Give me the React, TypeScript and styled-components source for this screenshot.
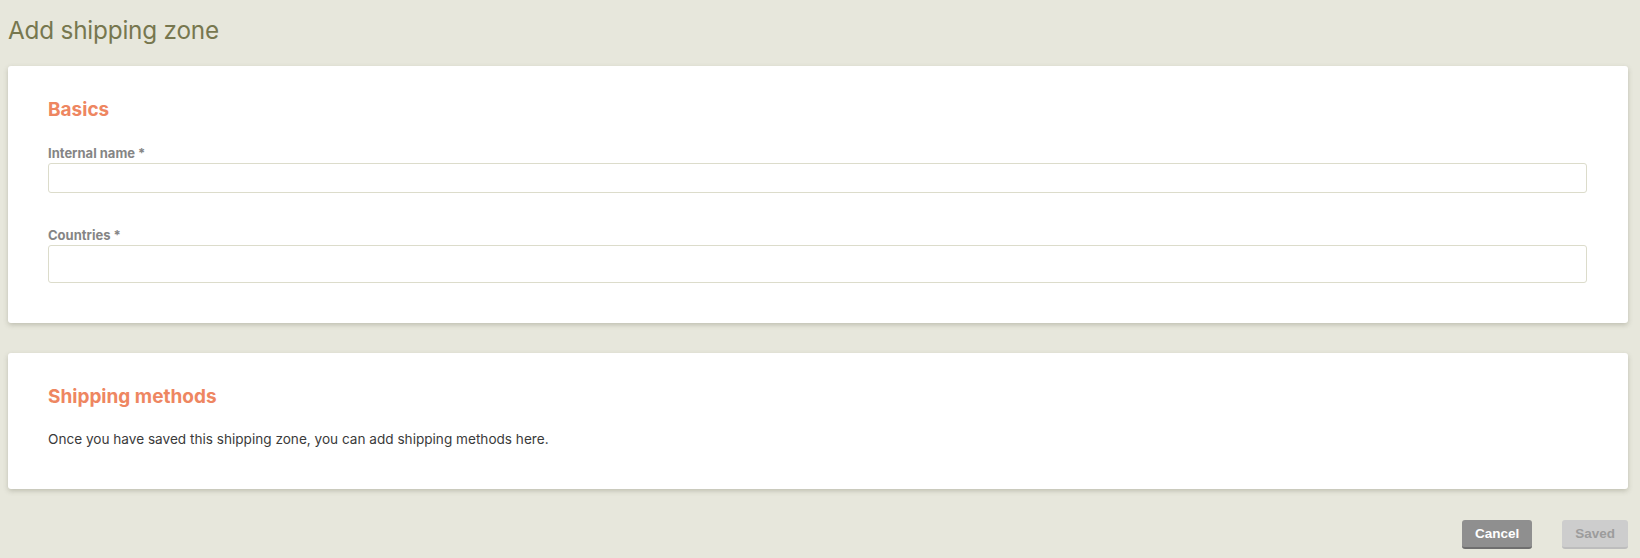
import React from 'react';
import styled, { createGlobalStyle } from 'styled-components';

const colors = {
  page: '#e7e7dc',
  title: '#77774f',
  accent: '#ee8661',
  label: '#858585',
  border: '#dcdccb',
  text: '#3a3a3a',
};

const GlobalStyle = createGlobalStyle`
  html, body {
    margin: 0;
    padding: 0;
    background: ${colors.page};
    font-family: Inter, "Noto Sans", sans-serif;
  }
`;

const Page = styled.div`
  min-height: 558px;
  box-sizing: border-box;
  padding: 14px 12px 0 8px;
  display: flex;
  flex-direction: column;
`;

const PageTitle = styled.h1`
  margin: 0 0 20px;
  font-size: 24.3px;
  line-height: 32px;
  font-weight: 400;
  color: ${colors.title};
  letter-spacing: -0.2px;
`;

const Card = styled.section`
  background: #fff;
  border-radius: 3px;
  box-shadow: 0 2px 5px rgba(90, 90, 70, 0.28);
  padding: 32px 41px 40px 40px;
  margin-bottom: 30px;
`;

const CardHeading = styled.h2`
  margin: 0;
  font-size: 19px;
  line-height: 24px;
  font-weight: 700;
  color: ${colors.accent};
`;

const Field = styled.div<{ $first?: boolean }>`
  display: flex;
  flex-direction: column;
  margin-top: ${p => (p.$first ? '23px' : '34px')};
`;

const Label = styled.label`
  font-size: 13px;
  line-height: 16px;
  font-weight: 700;
  color: ${colors.label};
  margin-bottom: 2px;
`;

const Input = styled.input<{ $tall?: boolean }>`
  box-sizing: border-box;
  height: ${p => (p.$tall ? '38px' : '30px')};
  width: 100%;
  border: 1px solid ${colors.border};
  border-radius: 3px;
  background: #fff;
  font: inherit;
  font-size: 13px;
  padding: 0 8px;
  outline: none;
`;

const Note = styled.p`
  margin: 20px 0 0;
  font-size: 13.6px;
  line-height: 20px;
  color: ${colors.text};
`;

const Actions = styled.div`
  display: flex;
  justify-content: flex-end;
  gap: 30px;
  margin-top: 1px;
`;

const Button = styled.button<{ $disabled?: boolean }>`
  height: 29px;
  box-sizing: border-box;
  padding: 0 13px;
  border: none;
  border-radius: 3px;
  font-family: "Liberation Sans", Arial, sans-serif;
  font-size: 13.5px;
  font-weight: 700;
  cursor: pointer;
  background: ${p => (p.$disabled ? '#cdcdcd' : '#8f8f8f')};
  color: ${p => (p.$disabled ? '#9c9c9c' : '#fff')};
  border-bottom: 2px solid ${p => (p.$disabled ? '#bdbdbd' : '#6f6f6f')};
`;

const App = () => {
  return (
    <Page>
      <GlobalStyle />
      <PageTitle>Add shipping zone</PageTitle>

      <Card>
        <CardHeading>Basics</CardHeading>
        <Field $first>
          <Label>Internal name *</Label>
          <Input type="text" />
        </Field>
        <Field>
          <Label>Countries *</Label>
          <Input type="text" $tall />
        </Field>
      </Card>

      <Card>
        <CardHeading>Shipping methods</CardHeading>
        <Note>Once you have saved this shipping zone, you can add shipping methods here.</Note>
      </Card>

      <Actions>
        <Button>Cancel</Button>
        <Button $disabled>Saved</Button>
      </Actions>
    </Page>
  );
};

export default App;
